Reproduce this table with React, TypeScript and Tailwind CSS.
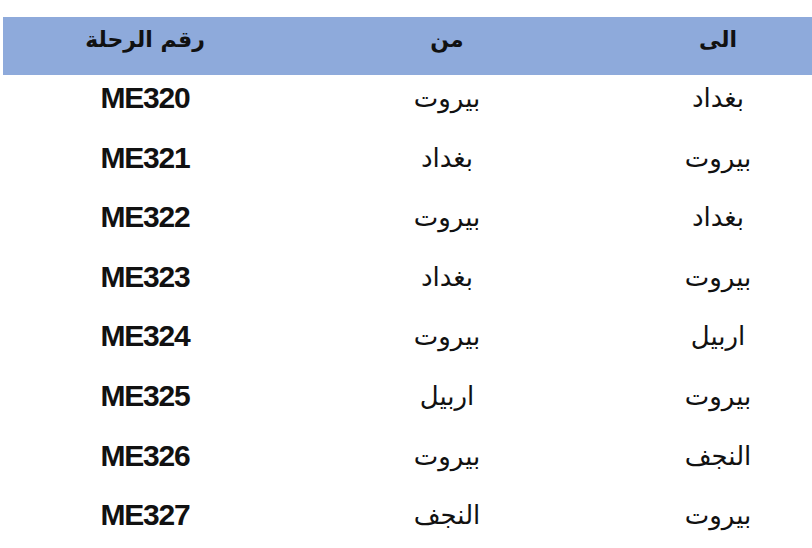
import React from "react";

const rows: [string, string, string][] = [
  ["ME320", "بيروت", "بغداد"],
  ["ME321", "بغداد", "بيروت"],
  ["ME322", "بيروت", "بغداد"],
  ["ME323", "بغداد", "بيروت"],
  ["ME324", "بيروت", "اربيل"],
  ["ME325", "اربيل", "بيروت"],
  ["ME326", "بيروت", "النجف"],
  ["ME327", "النجف", "بيروت"],
];

export default function App() {
  return (
    <div className="w-[812px] h-[548px] bg-white overflow-hidden text-[#111] font-['DejaVu_Sans',sans-serif]">
      <div className="pt-[17px] pl-[3px]">
        <div className="h-[58px] bg-[#8eaadb] grid grid-cols-[284px_320px_222px] items-start font-bold text-[22px] leading-[46px] text-center">
          <div dir="rtl">رقم الرحلة</div>
          <div dir="rtl">من</div>
          <div dir="rtl">الى</div>
        </div>
      </div>
      <div className="pl-[3px]">
        {rows.map((r) => (
          <div key={r[0]} className="h-[59.6px] grid grid-cols-[284px_320px_222px] items-start text-center leading-[46px]">
            <div className="font-['Liberation_Sans',Arial,sans-serif] font-bold text-[30px] tracking-[-0.04em]">
              {r[0]}
            </div>
            <div className="text-[26px]" dir="rtl">
              {r[1]}
            </div>
            <div className="text-[26px]" dir="rtl">
              {r[2]}
            </div>
          </div>
        ))}
      </div>
    </div>
  );
}
